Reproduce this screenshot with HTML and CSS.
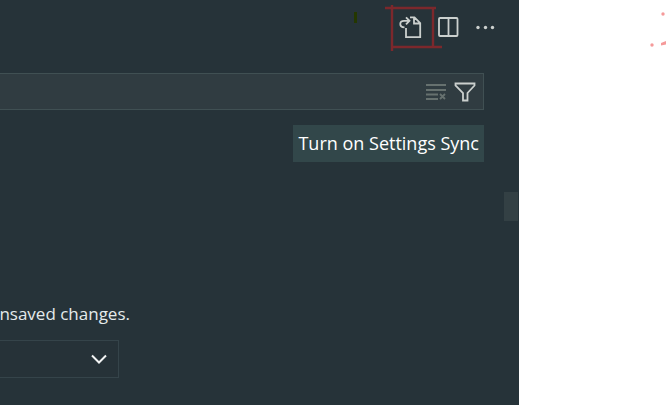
FILE: index.html
```
<!DOCTYPE html>
<html lang="en">
<head>
    <meta charset="UTF-8">
    <meta name="viewport" content="width=device-width, initial-scale=1.0">
    <title>Settings</title>
    <link rel="stylesheet" href="styles.css">
</head>
<body>
    <main class="editor">
        <div class="toolbar">
            <button class="icon-button marked" type="button" aria-label="Open Settings (JSON)">
                <svg width="24" height="24" viewBox="0 0 24 24">
                    <path d="M7 13v9.200h14.200V8l-5.700-5.700H11M15 2.500V8.500h6M5.500 12.300C2 12.300 1.300 10.800 1.300 9S2.500 5.800 5 5.800h5M7 2.300l3.500 3.500L7 9.300"/>
                </svg>
                <svg class="marker" width="58" height="50" viewBox="0 0 58 50">
                    <path d="M1 8h51M8 5v46M49 8v39M8 47h50"/>
                </svg>
            </button>
            <button class="icon-button" type="button" aria-label="Split Editor">
                <svg width="24" height="24" viewBox="0 0 24 24">
                    <rect x="3" y="3" width="18.500" height="18" rx="1"/>
                    <path d="M12.500 3v18"/>
                </svg>
            </button>
            <button class="icon-button" type="button" aria-label="More Actions">
                <svg class="solid" width="24" height="24" viewBox="0 0 24 24">
                    <circle cx="5" cy="12.500" r="1.700"/>
                    <circle cx="12.500" cy="12.500" r="1.700"/>
                    <circle cx="19.500" cy="12.500" r="1.700"/>
                </svg>
            </button>
            <span class="smudge"></span>
        </div>

        <div class="search">
            <input class="search-input" type="text" aria-label="Search settings">
            <button class="icon-button dim" type="button" aria-label="Clear Search">
                <svg width="24" height="24" viewBox="0 0 24 24">
                    <path d="M2 5h20M2 10h20M2 14.500h12M2 19h12M16 14l5 5M21 14l-5 5"/>
                </svg>
            </button>
            <button class="icon-button" type="button" aria-label="Filter Settings">
                <svg width="24" height="24" viewBox="0 0 24 24">
                    <path d="M2.500 3.500h19v2l-7 7.500v7.500h-4.500V13L2.500 5.500z"/>
                </svg>
            </button>
        </div>

        <button class="sync" type="button">Turn on Settings Sync</button>

        <div class="setting">
            <label class="description" for="autoSave">nsaved changes.</label>
            <div class="dropdown">
                <select id="autoSave"></select>
                <svg class="chevron" width="16" height="16" viewBox="0 0 16 16">
                    <path d="M1 4.500l7 7 7-7"/>
                </svg>
            </div>
        </div>

        <div class="scroll-thumb"></div>
    </main>
    <aside class="margin">
        <svg class="specks" width="18" height="38" viewBox="0 0 18 38">
            <circle cx="13" cy="4" r="1.700"/>
            <circle cx="2" cy="35" r="1.700"/>
            <path d="M11 33l5-2v3.500l-5 1z"/>
        </svg>
    </aside>
</body>
</html>
```
FILE: styles.css
```
* {
    box-sizing: border-box;
}
body {
    margin: 0;
    min-height: 100vh;
    display: grid;
    grid-template-columns: minmax(0, 1fr) 149px;
    background: #ffffff;
    font-family: "Open Sans", "Noto Sans", sans-serif;
    font-size: 18px;
    line-height: 24px;
}
.editor {
    position: relative;
    display: flex;
    flex-direction: column;
    padding-right: 35px;
    background: #263339;
    color: #e4eaeb;
    overflow: hidden;
}
.toolbar {
    position: relative;
    display: flex;
    justify-content: flex-end;
    gap: 13px;
    height: 73px;
    padding-top: 15px;
    margin-right: -13px;
}
.icon-button {
    position: relative;
    width: 24px;
    height: 24px;
    padding: 0;
    border: none;
    background: none;
    color: #cbd0ce;
    cursor: pointer;
}
.icon-button svg {
    display: block;
    fill: none;
    stroke: currentColor;
    stroke-width: 1.8;
}
.icon-button .solid {
    fill: currentColor;
    stroke: none;
}
.icon-button .marker {
    position: absolute;
    top: -15px;
    left: -15px;
    overflow: visible;
    stroke: #7c282c;
    stroke-width: 2.4;
    pointer-events: none;
}
.dim {
    color: #66716f;
}
.smudge {
    position: absolute;
    top: 12px;
    right: 140px;
    width: 3px;
    height: 11px;
    background: #243700;
}
.search {
    display: flex;
    align-items: center;
    gap: 5px;
    height: 37px;
    padding-right: 6px;
    border: 1px solid #405053;
    border-left: none;
    background: #303c41;
}
.search-input {
    flex: 1;
    min-width: 0;
    height: 100%;
    padding: 0;
    border: none;
    outline: none;
    background: transparent;
    color: inherit;
    font: inherit;
}
.sync {
    align-self: flex-end;
    height: 37px;
    margin-top: 15px;
    padding: 0 5px 2px;
    border: none;
    background: #32474a;
    color: #ffffff;
    font: inherit;
    cursor: pointer;
}
.setting {
    display: flex;
    flex-direction: column;
    align-items: flex-start;
    gap: 14px;
    margin-top: 140px;
}
.description {
    display: flex;
    justify-content: flex-end;
    width: 130px;
    font-size: 17px;
    white-space: nowrap;
}
.dropdown {
    position: relative;
    width: 119px;
}
.dropdown select {
    display: block;
    width: 100%;
    height: 38px;
    appearance: none;
    border: 1px solid #35444a;
    border-left: none;
    border-radius: 0;
    background: #263238;
    color: inherit;
    font: inherit;
}
.chevron {
    position: absolute;
    top: 11px;
    right: 12px;
    fill: none;
    stroke: #f2f4f4;
    stroke-width: 2;
    pointer-events: none;
}
.scroll-thumb {
    position: absolute;
    top: 192px;
    right: 1px;
    width: 14px;
    height: 29px;
    background: #334044;
}
.margin {
    position: relative;
}
.specks {
    position: absolute;
    top: 10px;
    right: 0;
    fill: #f59a9a;
}
```
